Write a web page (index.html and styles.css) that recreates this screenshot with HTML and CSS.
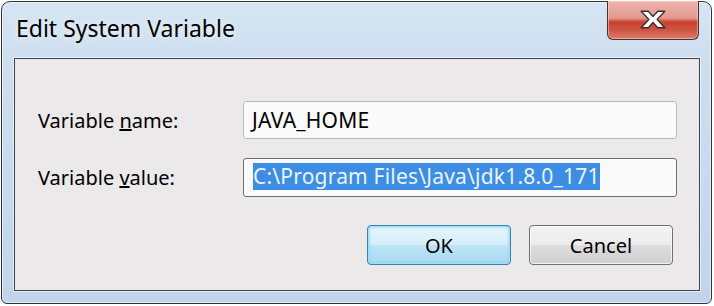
FILE: index.html
```html
<!DOCTYPE html>
<html lang="en">
<head>
    <meta charset="UTF-8">
    <meta name="viewport" content="width=device-width, initial-scale=1.0">
    <title>Edit System Variable</title>
    <link rel="stylesheet" href="styles.css">
</head>
<body>
    <div class="window">
        <div class="titlebar">
            <span class="title">Edit System Variable</span>
            <button class="close" aria-label="Close">
                <svg width="26" height="19" viewBox="0 0 22 16">
                    <path d="M1,1 H7 L11,5.5 L15,1 H21 L14.5,8 L21,15 H15 L11,10.5 L7,15 H1 L7.5,8 Z" fill="#fff" stroke="#3a3030" stroke-width="1.1" stroke-linejoin="round"/>
                </svg>
            </button>
        </div>

        <div class="client">
            <div class="row">
                <label class="label" for="var_name">Variable <u>n</u>ame:</label>
                <div class="field" id="var_name">JAVA_HOME</div>
            </div>
            <div class="row">
                <label class="label" for="var_value">Variable <u>v</u>alue:</label>
                <div class="field focused" id="var_value"><span class="selected">C:\Program Files\Java\jdk1.8.0_171</span></div>
            </div>

            <div class="buttons">
                <button class="btn default">OK</button>
                <button class="btn">Cancel</button>
            </div>
        </div>
    </div>
</body>
</html>
```

FILE: styles.css
```css
body {
    margin: 0;
    padding: 1px 2px 0 1px;
    background-color: #fff;
    font-family: 'Noto Sans', 'Open Sans', sans-serif;
}

.window {
    position: relative;
    width: 711px;
    height: 303px;
    border: 1px solid #2e3338;
    border-radius: 9px 9px 6px 6px;
    padding: 0 11px 12px 12px;
    box-sizing: border-box;
    background: linear-gradient(180deg, #d6e5f3 0%, #cddeef 20%, #c0d5eb 100%);
    box-shadow: inset 0 0 0 1px rgba(255, 255, 255, 0.55);
    display: flex;
    flex-direction: column;
}

.titlebar {
    height: 56px;
    display: flex;
    justify-content: space-between;
    align-items: flex-start;
    flex-shrink: 0;
}

.title {
    margin: 12px 0 0 2px;
    font-size: 23px;
    line-height: 28px;
    color: #000;
    text-shadow: 0 0 8px rgba(255, 255, 255, 0.9);
}

.close {
    width: 92px;
    height: 39px;
    margin: -1px 1px 0 0;
    padding: 0 0 2px 0;
    border: 1px solid #4a2f2a;
    border-top: none;
    border-radius: 0 0 6px 6px;
    background: linear-gradient(180deg, #ebb3aa 0%, #e49a8e 45%, #c8412e 55%, #cd5240 75%, #dc7d6d 100%);
    box-shadow: inset 0 0 0 1px rgba(255, 220, 210, 0.5);
    display: flex;
    align-items: center;
    justify-content: center;
}

.client {
    flex: 1;
    border: 1px solid #3f4246;
    background-color: #ebe9e9;
    box-shadow: 0 0 0 1px rgba(255, 255, 255, 0.6);
    padding: 42px 22px 0 23px;
    display: flex;
    flex-direction: column;
}

.row {
    display: flex;
    align-items: center;
    margin-bottom: 19px;
}

.label {
    width: 205px;
    font-size: 20px;
    color: #000;
}

.field {
    flex: 1;
    height: 38px;
    box-sizing: border-box;
    border: 1px solid #b9b9b9;
    border-radius: 3px;
    background-color: #fafafa;
    padding-left: 8px;
    font-size: 21px;
    letter-spacing: 0.2px;
    line-height: 36px;
    color: #000;
}

.field.focused {
    height: 39px;
    border-color: #6e6e6e;
    padding-left: 9px;
    padding-top: 4px;
    line-height: 27px;
}

.selected {
    display: inline-block;
    background-color: #3d8de4;
    color: #e9f6ff;
    line-height: 27px;
}

.buttons {
    display: flex;
    justify-content: flex-end;
    gap: 18px;
    margin-top: 9px;
    padding-right: 4px;
}

.btn {
    width: 144px;
    height: 40px;
    border: 1px solid #707070;
    border-radius: 4px;
    font-family: 'Noto Sans', 'Open Sans', sans-serif;
    font-size: 20px;
    color: #000;
    background: linear-gradient(180deg, #f3f3f3 0%, #ececec 48%, #dddddd 52%, #cfcfcf 100%);
    box-shadow: inset 0 0 0 1px rgba(255, 255, 255, 0.7);
}

.btn.default {
    border-color: #3c7fb1;
    background: linear-gradient(180deg, #e6f5fc 0%, #d6eefa 48%, #bde4f7 52%, #a7d8f2 100%);
    box-shadow: inset 0 0 0 1px #9ee1f7, inset 0 0 3px 1px #7fd0ef;
}
```
